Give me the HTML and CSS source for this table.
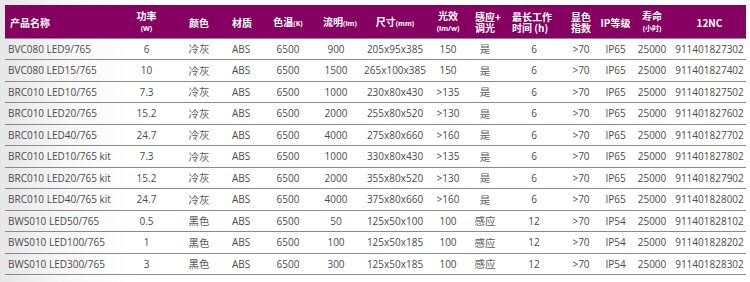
FILE: index.html
```html
<!DOCTYPE html>
<html lang="zh">
<head>
<meta charset="utf-8">
<title>产品规格</title>
<link rel="stylesheet" href="styles.css">
</head>
<body>
<table class="spec">
<colgroup>
<col class="w-name"><col class="w-pow"><col class="w-col"><col class="w-mat"><col class="w-cct"><col class="w-lm"><col class="w-size"><col class="w-eff"><col class="w-sen"><col class="w-time"><col class="w-cri"><col class="w-ip"><col class="w-life"><col class="w-nc">
</colgroup>
<thead>
<tr>
<th class="name">产品名称</th>
<th>功率<br><small>(W)</small></th>
<th>颜色</th>
<th class="mat">材质</th>
<th>色温<small>(K)</small></th>
<th class="lm">流明<small>(lm)</small></th>
<th>尺寸<small>(mm)</small></th>
<th>光效<br><small>(lm/w)</small></th>
<th class="sen">感应+<br>调光</th>
<th class="left">最长工作<br>时间 (h)</th>
<th>显色<br>指数</th>
<th>IP等级</th>
<th>寿命<br><small>(小时)</small></th>
<th>12NC</th>
</tr>
</thead>
<tbody>
<tr><td class="name">BVC080 LED9/765</td><td>6</td><td class="cn">冷灰</td><td class="mat">ABS</td><td>6500</td><td>900</td><td>205x95x385</td><td>150</td><td class="cn">是</td><td>6</td><td>&gt;70</td><td>IP65</td><td>25000</td><td>911401827302</td></tr>
<tr><td class="name">BVC080 LED15/765</td><td>10</td><td class="cn">冷灰</td><td class="mat">ABS</td><td>6500</td><td>1500</td><td>265x100x385</td><td>150</td><td class="cn">是</td><td>6</td><td>&gt;70</td><td>IP65</td><td>25000</td><td>911401827402</td></tr>
<tr><td class="name">BRC010 LED10/765</td><td>7.3</td><td class="cn">冷灰</td><td class="mat">ABS</td><td>6500</td><td>1000</td><td>230x80x430</td><td>&gt;135</td><td class="cn">是</td><td>6</td><td>&gt;70</td><td>IP65</td><td>25000</td><td>911401827502</td></tr>
<tr><td class="name">BRC010 LED20/765</td><td>15.2</td><td class="cn">冷灰</td><td class="mat">ABS</td><td>6500</td><td>2000</td><td>255x80x520</td><td>&gt;130</td><td class="cn">是</td><td>6</td><td>&gt;70</td><td>IP65</td><td>25000</td><td>911401827602</td></tr>
<tr><td class="name">BRC010 LED40/765</td><td>24.7</td><td class="cn">冷灰</td><td class="mat">ABS</td><td>6500</td><td>4000</td><td>275x80x660</td><td>&gt;160</td><td class="cn">是</td><td>6</td><td>&gt;70</td><td>IP65</td><td>25000</td><td>911401827702</td></tr>
<tr><td class="name">BRC010 LED10/765 kit</td><td>7.3</td><td class="cn">冷灰</td><td class="mat">ABS</td><td>6500</td><td>1000</td><td>330x80x430</td><td>&gt;135</td><td class="cn">是</td><td>6</td><td>&gt;70</td><td>IP65</td><td>25000</td><td>911401827802</td></tr>
<tr><td class="name">BRC010 LED20/765 kit</td><td>15.2</td><td class="cn">冷灰</td><td class="mat">ABS</td><td>6500</td><td>2000</td><td>355x80x520</td><td>&gt;130</td><td class="cn">是</td><td>6</td><td>&gt;70</td><td>IP65</td><td>25000</td><td>911401827902</td></tr>
<tr><td class="name">BRC010 LED40/765 kit</td><td>24.7</td><td class="cn">冷灰</td><td class="mat">ABS</td><td>6500</td><td>4000</td><td>375x80x660</td><td>&gt;160</td><td class="cn">是</td><td>6</td><td>&gt;70</td><td>IP65</td><td>25000</td><td>911401828002</td></tr>
<tr><td class="name">BWS010 LED50/765</td><td>0.5</td><td class="cn">黑色</td><td class="mat">ABS</td><td>6500</td><td>50</td><td>125x50x100</td><td>100</td><td class="cn">感应</td><td>12</td><td>&gt;70</td><td>IP54</td><td>25000</td><td>911401828102</td></tr>
<tr><td class="name">BWS010 LED100/765</td><td>1</td><td class="cn">黑色</td><td class="mat">ABS</td><td>6500</td><td>100</td><td>125x50x185</td><td>100</td><td class="cn">感应</td><td>12</td><td>&gt;70</td><td>IP54</td><td>25000</td><td>911401828202</td></tr>
<tr><td class="name">BWS010 LED300/765</td><td>3</td><td class="cn">黑色</td><td class="mat">ABS</td><td>6500</td><td>300</td><td>125x50x185</td><td>100</td><td class="cn">感应</td><td>12</td><td>&gt;70</td><td>IP54</td><td>25000</td><td>911401828302</td></tr>
</tbody>
</table>
</body>
</html>
```
FILE: styles.css
```css
html, body {
  margin: 0;
  padding: 0;
}
body {
  width: 750px;
  height: 282px;
  overflow: hidden;
  background: linear-gradient(to right, #e6e6e6 0, #f6f6f6 60px, #ffffff 130px);
  font-family: "Open Sans", "Noto Sans CJK SC", sans-serif;
  color: #4a4a4a;
}
.spec {
  margin: 5px 0 0 5px;
  width: 741px;
  table-layout: fixed;
  border-collapse: collapse;
  border-spacing: 0;
}
.w-name { width: 120px; }
.w-pow { width: 43px; }
.w-col { width: 62px; }
.w-mat { width: 32px; }
.w-cct { width: 52px; }
.w-lm { width: 44px; }
.w-size { width: 74px; }
.w-eff { width: 32px; }
.w-sen { width: 42px; }
.w-time { width: 56px; }
.w-cri { width: 38px; }
.w-ip { width: 31px; }
.w-life { width: 42px; }
.w-nc { width: 73px; }

.spec th {
  background: #850060;
  color: #ffffff;
  font-family: "Noto Sans CJK SC", "Open Sans", sans-serif;
  font-weight: 700;
  font-size: 10px;
  line-height: 11px;
  height: 33px;
  padding: 2px 0 0 0;
  box-sizing: border-box;
  text-align: center;
  vertical-align: middle;
  white-space: nowrap;
  border-bottom: 1px solid #8a8a8a;
}
.spec th small {
  font-family: "Open Sans", "Noto Sans CJK SC", sans-serif;
  font-size: 7px;
  font-weight: 700;
}
.spec th.name {
  text-align: left;
  padding-left: 5px;
}
.spec th.mat {
  text-align: left;
  padding-left: 2px;
}
.spec th.lm {
  padding-left: 8px;
}
.spec th.sen {
  text-align: left;
  padding-left: 11px;
}
.spec th.left {
  text-align: left;
  padding-left: 6px;
}
.spec td {
  font-size: 10px;
  height: 21.5px;
  padding: 0;
  box-sizing: border-box;
  text-align: center;
  vertical-align: middle;
  white-space: nowrap;
  border-bottom: 1px solid #8a8a8a;
}
.spec td.name {
  text-align: left;
  padding-left: 3px;
}
.spec td.mat {
  text-align: left;
  padding-left: 2px;
}
.spec td.cn {
  font-family: "Noto Sans CJK SC", sans-serif;
  font-size: 10.5px;
  color: #5a5a5a;
}
```
